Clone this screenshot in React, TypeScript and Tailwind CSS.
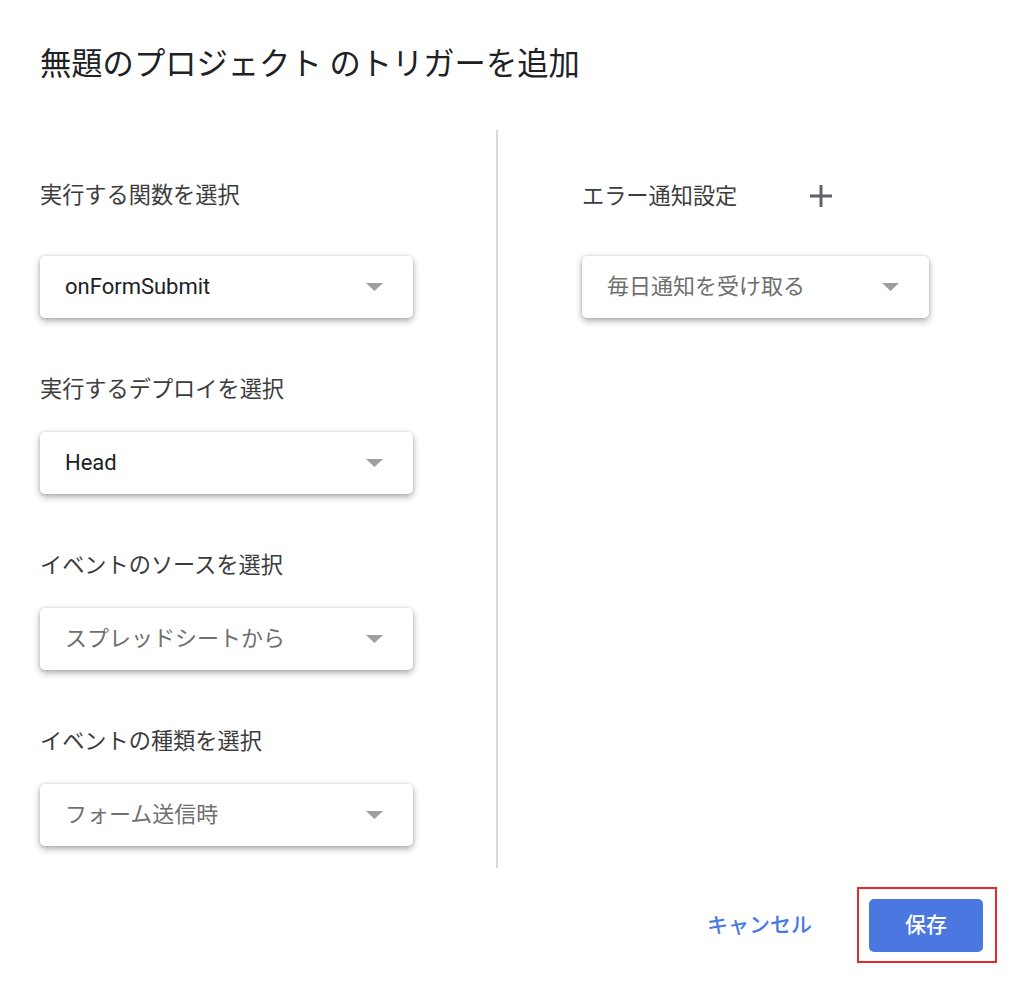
const font = { fontFamily: 'Roboto, "Noto Sans CJK JP", sans-serif' };

function Caret() {
  return (
    <svg width="17" height="8" viewBox="0 0 17 8" className="shrink-0">
      <path d="M0 0 L17 0 L8.5 8 Z" fill="#9e9e9e" />
    </svg>
  );
}

function Select({ value, muted, width }: { value: string; muted?: boolean; width: string }) {
  return (
    <div
      className={`${width} h-[62px] bg-white rounded-[5px] shadow-[0_3px_7px_rgba(0,0,0,0.32),0_0_3px_rgba(0,0,0,0.14)] flex items-center justify-between pl-[25px] pr-[30px]`}
    >
      <span className={`text-[22px] leading-none ${muted ? 'text-[#6f6f6f]' : 'text-[#202124]'}`}>{value}</span>
      <Caret />
    </div>
  );
}

const fields = [
  { label: '実行する関数を選択', value: 'onFormSubmit', muted: false },
  { label: '実行するデプロイを選択', value: 'Head', muted: false },
  { label: 'イベントのソースを選択', value: 'スプレッドシートから', muted: true },
  { label: 'イベントの種類を選択', value: 'フォーム送信時', muted: true },
];

export default function App() {
  return (
    <div className="w-[1024px] h-[982px] bg-white text-[#202124]" style={font}>
      <h1 className="pl-[40px] pt-[45px] text-[31.3px] leading-[40px] font-normal text-[#202124]">
        無題のプロジェクト のトリガーを追加
      </h1>

      <div className="flex mt-[45px] h-[738px]">
        <div className="pl-[40px] pt-[50px] flex flex-col">
          {fields.map((f, i) => (
            <div key={i} className={i === 0 ? '' : 'mt-[56px]'}>
              <div className="text-[22.2px] leading-[30px] text-[#3c3c3c]">{f.label}</div>
              <div className={i === 0 ? 'mt-[46px]' : 'mt-[28px]'}>
                <Select value={f.value} muted={f.muted} width="w-[373px]" />
              </div>
            </div>
          ))}
        </div>

        <div className="ml-[83px] w-[2px] h-full bg-[#dadada]" />

        <div className="ml-[84px] pt-[51px]">
          <div className="flex items-center">
            <span className="text-[22.2px] leading-[30px] text-[#3c3c3c]">エラー通知設定</span>
            <svg width="22" height="22" viewBox="0 0 22 22" className="ml-[73px]">
              <path d="M11 0 V22 M0 11 H22" stroke="#5f6368" strokeWidth="3" />
            </svg>
          </div>
          <div className="mt-[45px]">
            <Select value="毎日通知を受け取る" muted width="w-[347px]" />
          </div>
        </div>
      </div>

      <div className="flex justify-end items-center mt-[19px] pr-[27px]">
        <button className="text-[21px] font-medium text-[#4a7ae0] mr-[45px] leading-none">キャンセル</button>
        <div className="border-2 border-[#e62a2a] pt-[10px] pb-[9px] pl-[10px] pr-[12px]">
          <button className="w-[114px] h-[53px] rounded-[5px] bg-[#4a78e0] text-white text-[21px] font-medium">
            保存
          </button>
        </div>
      </div>
    </div>
  );
}
